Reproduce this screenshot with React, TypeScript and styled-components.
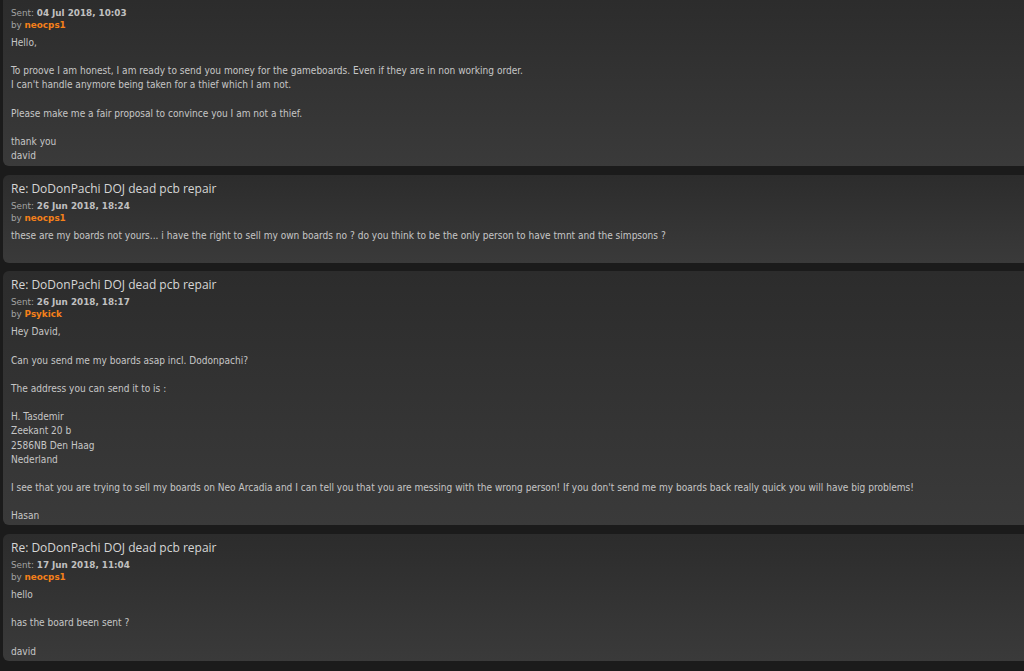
import React from "react";
import styled, { createGlobalStyle } from "styled-components";

type Post = {
  title?: string;
  date: string;
  author: string;
  lines: string[];
};

const posts: Post[] = [
  {
    date: "04 Jul 2018, 10:03",
    author: "neocps1",
    lines: [
      "Hello,",
      "",
      "To proove I am honest, I am ready to send you money for the gameboards. Even if they are in non working order.",
      "I can't handle anymore being taken for a thief which I am not.",
      "",
      "Please make me a fair proposal to convince you I am not a thief.",
      "",
      "thank you",
      "david",
    ],
  },
  {
    title: "Re: DoDonPachi DOJ dead pcb repair",
    date: "26 Jun 2018, 18:24",
    author: "neocps1",
    lines: [
      "these are my boards not yours... i have the right to sell my own boards no ? do you think to be the only person to have tmnt and the simpsons ?",
    ],
  },
  {
    title: "Re: DoDonPachi DOJ dead pcb repair",
    date: "26 Jun 2018, 18:17",
    author: "Psykick",
    lines: [
      "Hey David,",
      "",
      "Can you send me my boards asap incl. Dodonpachi?",
      "",
      "The address you can send it to is :",
      "",
      "H. Tasdemir",
      "Zeekant 20 b",
      "2586NB Den Haag",
      "Nederland",
      "",
      "I see that you are trying to sell my boards on Neo Arcadia and I can tell you that you are messing with the wrong person! If you don't send me my boards back really quick you will have big problems!",
      "",
      "Hasan",
    ],
  },
  {
    title: "Re: DoDonPachi DOJ dead pcb repair",
    date: "17 Jun 2018, 11:04",
    author: "neocps1",
    lines: ["hello", "", "has the board been sent ?", "", "david"],
  },
];

const GlobalStyle = createGlobalStyle`
  html, body {
    margin: 0;
    padding: 0;
    background: #1b1b1b;
    overflow: hidden;
  }
`;

const Page = styled.div`
  display: flex;
  flex-direction: column;
  gap: 8.5px;
  padding-left: 3px;
  height: 671px;
  overflow: hidden;
`;

// $cut: the post continues above the top of the page (scrolled past)
const PostBox = styled.div<{ $cut?: boolean }>`
  flex-shrink: 0;
  padding: ${(p) => (p.$cut ? "7px 8px 3px" : "5px 8px 2px")};
  border-radius: ${(p) => (p.$cut ? "0 0 0 6px" : "6px 0 0 6px")};
  background: linear-gradient(to bottom, #2c2c2c 0%, #3a3a3a 100%);
`;

const Title = styled.h3`
  margin: 0 0 3px 0;
  font-family: "Open Sans", "Liberation Sans", sans-serif;
  font-size: 12px;
  font-weight: 400;
  line-height: 17px;
  color: #d6d6d6;
`;

const Meta = styled.p`
  margin: 0;
  font-family: "DejaVu Sans", Verdana, sans-serif;
  font-size: 8.8px;
  line-height: 12px;
  color: #a2a2a2;

  b {
    color: #c0c0c0;
  }
`;

const Author = styled.span`
  font-weight: 700;
  color: #f5801a;
`;

const Content = styled.div`
  margin-top: 5px;
  min-height: 32px;
  font-family: "DejaVu Sans Condensed", "Open Sans", sans-serif;
  font-size: 10.05px;
  line-height: 14.15px;
  color: #c6c6c6;
`;

const Line = styled.div`
  min-height: 14.15px;
  white-space: nowrap;
`;

export default function App() {
  return (
    <>
      <GlobalStyle />
      <Page>
        {posts.map((p, i) => (
          <PostBox key={i} $cut={!p.title}>
            {p.title && <Title>{p.title}</Title>}
            <Meta>
              Sent: <b>{p.date}</b>
            </Meta>
            <Meta>
              by <Author>{p.author}</Author>
            </Meta>
            <Content>
              {p.lines.map((l, j) => (
                <Line key={j}>{l}</Line>
              ))}
            </Content>
          </PostBox>
        ))}
      </Page>
    </>
  );
}
